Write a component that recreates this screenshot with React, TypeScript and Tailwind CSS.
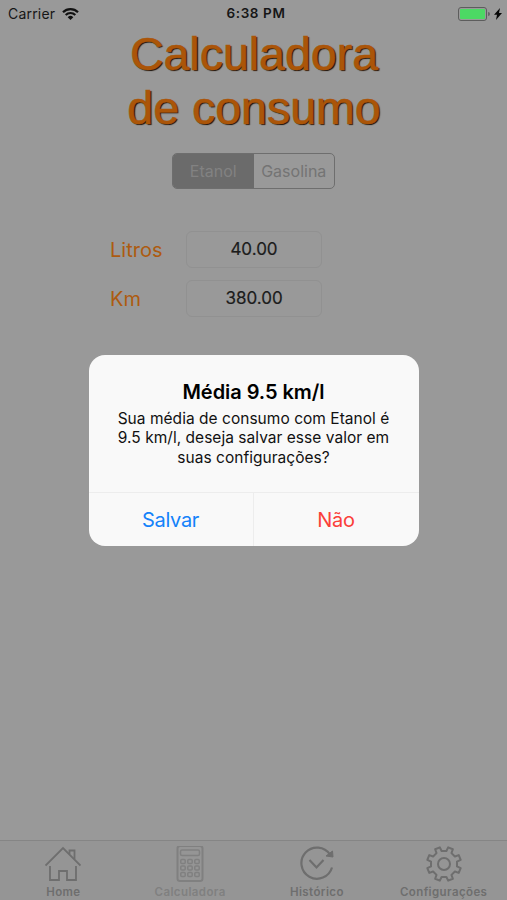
import { useState } from 'react';
import type { ReactNode } from 'react';

type Fuel = 'Etanol' | 'Gasolina';

interface Tab {
  label: string;
  icon: ReactNode;
  active?: boolean;
}

// Gear outline: 8 teeth, with a notch at the top
const gearPath = () => {
  const pts: string[] = [];
  for (let i = 0; i < 8; i++) {
    const base = i * 45 + 22.5;
    const corners = [[-12, 13.2], [-8.500, 17.2], [8.500, 17.2], [12, 13.2]];
    corners.forEach(([deg, r]) => {
      const a = ((base + deg) * Math.PI) / 180;
      pts.push(`${(18 + r * Math.sin(a)).toFixed(2)} ${(18 - r * Math.cos(a)).toFixed(2)}`);
    });
  }
  return `M${pts.join('L')}Z`;
};

const HomeIcon = () => (
  <svg className="h-9 w-9" viewBox="0 0 36 36" fill="none" stroke="currentColor" strokeWidth="1.8">
    <path d="M.5 19.500 18 2l17.500 17.500" />
    <path d="M5 20v14h9v-9h8v9h9V20" />
    <path d="M24.500 8V4.500h5V13" />
  </svg>
);

const CalculatorIcon = () => (
  <svg className="h-9 w-9" viewBox="0 0 36 36" fill="none" stroke="currentColor" strokeWidth="1.5">
    <rect x="5.500" y="0" width="25" height="35" rx="2.500" strokeWidth="2" />
    <rect x="8.500" y="4" width="19" height="5.500" rx="1.500" />
    {[15.5, 22, 28.5].map((y) =>
      [11, 18, 25].map((x) => <rect key={`${x}-${y}`} x={x - 2.2} y={y - 2} width="4.400" height="4" rx="1" />)
    )}
  </svg>
);

const HistoryIcon = () => (
  <svg className="h-9 w-9" viewBox="0 0 36 36" fill="none" stroke="currentColor" strokeWidth="2.200">
    <path d="M33 21.500A15.600 15.600 0 1 1 31 8.500" />
    <path d="m10.500 14 7 7.500 7-7.500" />
    <path d="m33.500 5 .5 6-7-1Z" fill="currentColor" strokeWidth="1" />
  </svg>
);

const GearIcon = () => (
  <svg className="h-9 w-9" viewBox="0 0 36 36" fill="none" stroke="currentColor" strokeWidth="2" strokeLinejoin="round">
    <path d={gearPath()} />
    <circle cx="18" cy="18" r="6" />
  </svg>
);

const tabs: Tab[] = [
  { label: 'Home', icon: <HomeIcon /> },
  { label: 'Calculadora', icon: <CalculatorIcon />, active: true },
  { label: 'Histórico', icon: <HistoryIcon /> },
  { label: 'Configurações', icon: <GearIcon /> },
];

function StatusBar() {
  return (
    <header className="grid h-[27px] shrink-0 grid-cols-3 items-center px-2 text-[14px] leading-none text-[#161616]">
      <div className="flex items-center gap-[7px]">
        <span className="tracking-[0.2px]">Carrier</span>
        <svg className="h-3 w-[17px]" viewBox="0 0 17 12" fill="none" stroke="#111" strokeWidth="2.200">
          <path d="M1 4.300a10.600 10.600 0 0 1 15 0M3.700 7a6.800 6.800 0 0 1 9.600 0" />
          <path d="M8.500 12 5.700 9.200a4 4 0 0 1 5.600 0Z" fill="#111" stroke="none" />
        </svg>
      </div>
      <span className="mt-px ml-[5px] text-center text-[13.500px] font-semibold tracking-[0.6px]">6:38 PM</span>
      <div className="-mr-[3px] flex items-center justify-end">
        <div className="h-[14px] w-[29px] rounded-[3px] border border-[#5d5d5d] p-px">
          <div className="h-full rounded-[1px] bg-[#4cd964]" />
        </div>
        <div className="ml-px h-1 w-[2px] rounded-r bg-[#666]" />
        <svg className="ml-1 h-3 w-[8px]" viewBox="0 0 8 12">
          <path d="M6 0 0 6.700h3L2 12l6-7H5Z" fill="#080808" />
        </svg>
      </div>
    </header>
  );
}

function Field({ label, value }: { label: string; value: string }) {
  return (
    <label className="flex h-[37px] items-center">
      <span className="w-[76px] text-[20px] text-[#ad5b10]">{label}</span>
      <input
        defaultValue={value}
        className="h-full w-[136px] rounded-[6px] border border-[#919191] bg-transparent pb-[2px] text-center text-[17px] text-[#1c1c1c] outline-none [-webkit-text-stroke:0.2px_#1c1c1c]"
      />
    </label>
  );
}

export default function App() {
  const [fuel, setFuel] = useState<Fuel>('Etanol');
  const [alertOpen, setAlertOpen] = useState(true);

  return (
    <div className="relative flex h-[900px] w-[507px] flex-col overflow-hidden bg-[#999999] font-['Inter',sans-serif]">
      <StatusBar />

      <main className="flex flex-1 flex-col items-center">
        <h1 className="ml-px text-center font-['Liberation_Sans',sans-serif] text-[46.500px] leading-[54px] text-[#ab5508] [-webkit-text-stroke:0.5px_#ab5508] [text-shadow:1.300px_1.300px_1px_#1d1208]">
          Calculadora
          <br />
          de consumo
        </h1>

        {/* Fuel selector */}
        <div className="mt-[18px] grid h-[36px] w-[163px] grid-cols-2 overflow-hidden rounded-[5px] border border-[#6e6e6e] text-[16px]">
          {(['Etanol', 'Gasolina'] as Fuel[]).map((item) => (
            <button
              key={item}
              onClick={() => setFuel(item)}
              className={fuel === item ? 'bg-[#6b6b6b] text-[#828282]' : 'text-[#747474]'}
            >
              {item}
            </button>
          ))}
        </div>

        <div className="mt-[42px] mr-[76px] flex flex-col gap-3 pl-[1px]">
          <Field label="Litros" value="40.00" />
          <Field label="Km" value="380.00" />
        </div>
      </main>

      {/* Bottom tabs */}
      <nav className="grid h-[60px] shrink-0 grid-cols-4 border-t border-[#858585] bg-[#959595]">
        {tabs.map((tab) => (
          <button
            key={tab.label}
            className={`flex flex-col items-center pt-[5px] ${tab.active ? 'text-[#808080]' : 'text-[#6e6e6e]'}`}
          >
            {tab.icon}
            <span className="mt-[3px] text-[11.500px] leading-[14px] font-semibold tracking-[0.4px]">{tab.label}</span>
          </button>
        ))}
      </nav>

      {alertOpen && (
        <div className="absolute inset-0 flex items-center justify-center">
          <div role="alertdialog" className="flex h-[191px] w-[330px] flex-col overflow-hidden rounded-[16px] bg-[#f9f9f9] text-center">
            <div className="flex-1 pt-[24px] text-black">
              <h2 className="text-[20px] leading-[26px] font-semibold tracking-[-0.05px]">Média 9.5 km/l</h2>
              <p className="mt-[4px] text-[15.500px] leading-[19.500px] tracking-[0.03px] text-[#111]">
                Sua média de consumo com Etanol é
                <br />
                9.5 km/l, deseja salvar esse valor em
                <br />
                suas configurações?
              </p>
            </div>
            <div className="grid h-[54px] grid-cols-2 border-t border-[#ededed] text-[20px] tracking-[-0.3px]">
              <button onClick={() => setAlertOpen(false)} className="border-r border-[#ededed] pt-[2px] text-[#1482fa]">
                Salvar
              </button>
              <button onClick={() => setAlertOpen(false)} className="pt-[2px] text-[#fb3f39]">
                Não
              </button>
            </div>
          </div>
        </div>
      )}
    </div>
  );
}
